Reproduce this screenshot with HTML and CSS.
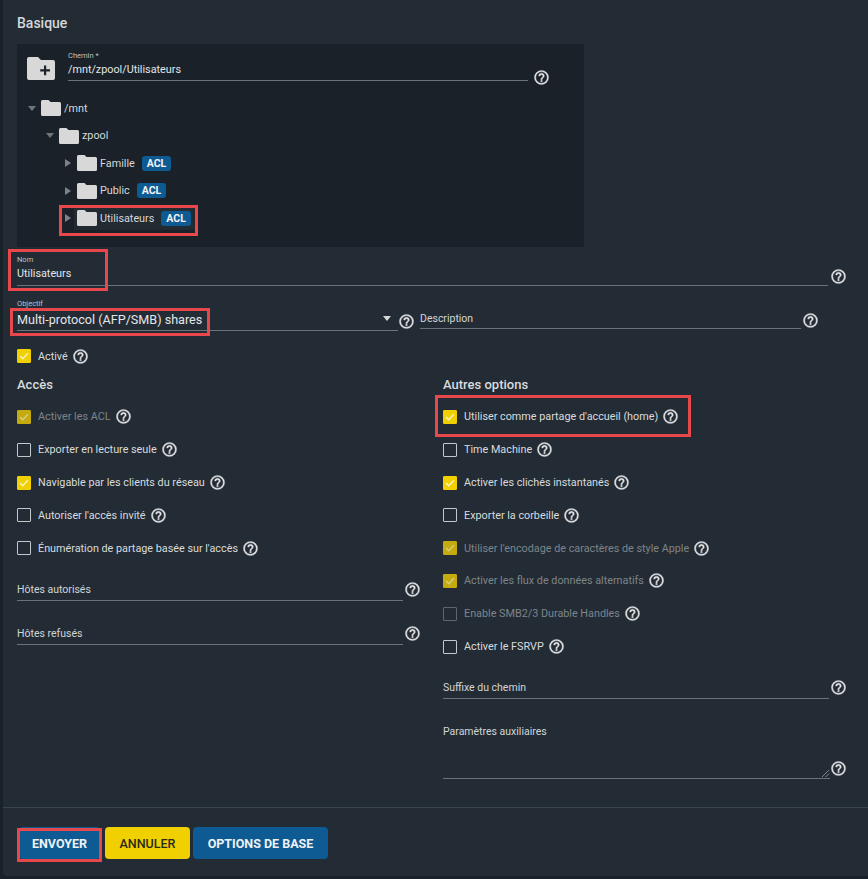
FILE: index.html
```html
<!DOCTYPE html>
<html lang="fr">
<head>
<meta charset="utf-8">
<title>Basique</title>
<link rel="stylesheet" href="styles.css">
</head>
<body>
<svg class="defs" aria-hidden="true">
  <symbol id="help" viewBox="0 0 24 24"><path d="M11,18H13V16H11V18M12,2A10,10 0 0,0 2,12A10,10 0 0,0 12,22A10,10 0 0,0 22,12A10,10 0 0,0 12,2M12,20C7.59,20 4,16.41 4,12C4,7.59 7.59,4 12,4C16.41,4 20,7.59 20,12C20,16.41 16.41,20 12,20M12,6A4,4 0 0,0 8,10H10A2,2 0 0,1 12,8A2,2 0 0,1 14,10C14,12 11,11.75 11,15H13C13,12.75 16,12.5 16,10A4,4 0 0,0 12,6Z"/></symbol>
  <symbol id="folder" viewBox="0 0 20 16"><path d="M1.5 0H7.5L9.5 2H18.5A1.5 1.5 0 0 1 20 3.5V14.5A1.5 1.5 0 0 1 18.5 16H1.5A1.5 1.5 0 0 1 0 14.5V1.5A1.5 1.5 0 0 1 1.5 0Z"/></symbol>
  <symbol id="check" viewBox="0 0 14 14"><path d="M2.5 7.2L5.6 10.2L11.5 3.8" fill="none" stroke="currentColor" stroke-width="1.8"/></symbol>
</svg>
<main class="card">
  <h2 class="section-title">Basique</h2>
  <section class="tree-box">
    <div class="path-row">
      <svg class="folder-add" viewBox="0 0 28 23"><path class="folder-add-shape" d="M2 0H11L14 3H26A2 2 0 0 1 28 5V21A2 2 0 0 1 26 23H2A2 2 0 0 1 0 21V2A2 2 0 0 1 2 0Z"/><path class="folder-add-plus" d="M17 8.5H19.2V12.3H23V14.5H19.2V18.300H17V14.500H13.200V12.300H17Z"/></svg>
      <div class="field path-field">
        <span class="mini-label">Chemin *</span>
        <span class="value">/mnt/zpool/Utilisateurs</span>
      </div>
      <svg class="help path-help"><use href="#help"/></svg>
    </div>
    <ul class="tree">
      <li class="node lvl-0"><span class="arrow down"></span><svg class="folder"><use href="#folder"/></svg><span>/mnt</span></li>
      <li class="node lvl-1"><span class="arrow down"></span><svg class="folder"><use href="#folder"/></svg><span>zpool</span></li>
      <li class="node lvl-2"><span class="arrow right"></span><svg class="folder"><use href="#folder"/></svg><span>Famille</span><span class="acl">ACL</span></li>
      <li class="node lvl-2"><span class="arrow right"></span><svg class="folder"><use href="#folder"/></svg><span>Public</span><span class="acl">ACL</span></li>
      <li class="node lvl-2"><span class="arrow right"></span><span class="node-active"><svg class="folder"><use href="#folder"/></svg><span>Utilisateurs</span><span class="acl">ACL</span></span></li>
    </ul>
  </section>

  <div class="name-row">
    <div class="field grow">
      <span class="mini-label">Nom</span>
      <span class="value">Utilisateurs</span>
    </div>
    <svg class="help"><use href="#help"/></svg>
  </div>

  <div class="purpose-row">
    <div class="field purpose">
      <span class="mini-label">Objectif</span>
      <span class="value large">Multi-protocol (AFP/SMB) shares</span>
      <span class="caret"></span>
    </div>
    <svg class="help"><use href="#help"/></svg>
    <div class="field description"><span class="plain-label">Description</span></div>
    <svg class="help"><use href="#help"/></svg>
  </div>

  <label class="check-row active-row"><span class="box on"><svg><use href="#check"/></svg></span><span>Activé</span><svg class="help"><use href="#help"/></svg></label>

  <div class="columns">
    <div class="col">
      <h3 class="col-title">Accès</h3>
      <div class="check-row dim"><span class="box on"><svg><use href="#check"/></svg></span><span>Activer les ACL</span><svg class="help"><use href="#help"/></svg></div>
      <div class="check-row"><span class="box"></span><span>Exporter en lecture seule</span><svg class="help"><use href="#help"/></svg></div>
      <div class="check-row"><span class="box on"><svg><use href="#check"/></svg></span><span>Navigable par les clients du réseau</span><svg class="help"><use href="#help"/></svg></div>
      <div class="check-row"><span class="box"></span><span>Autoriser l'accès invité</span><svg class="help"><use href="#help"/></svg></div>
      <div class="check-row"><span class="box"></span><span>Énumération de partage basée sur l'accès</span><svg class="help"><use href="#help"/></svg></div>
      <div class="line-row first-line"><div class="field grow"><span class="plain-label">Hôtes autorisés</span></div><svg class="help"><use href="#help"/></svg></div>
      <div class="line-row"><div class="field grow"><span class="plain-label">Hôtes refusés</span></div><svg class="help"><use href="#help"/></svg></div>
    </div>
    <div class="col right">
      <h3 class="col-title">Autres options</h3>
      <div class="check-row"><span class="box on"><svg><use href="#check"/></svg></span><span>Utiliser comme partage d'accueil (home)</span><svg class="help"><use href="#help"/></svg></div>
      <div class="check-row"><span class="box"></span><span>Time Machine</span><svg class="help"><use href="#help"/></svg></div>
      <div class="check-row"><span class="box on"><svg><use href="#check"/></svg></span><span>Activer les clichés instantanés</span><svg class="help"><use href="#help"/></svg></div>
      <div class="check-row"><span class="box"></span><span>Exporter la corbeille</span><svg class="help"><use href="#help"/></svg></div>
      <div class="check-row dim"><span class="box on"><svg><use href="#check"/></svg></span><span>Utiliser l'encodage de caractères de style Apple</span><svg class="help"><use href="#help"/></svg></div>
      <div class="check-row dim"><span class="box on"><svg><use href="#check"/></svg></span><span>Activer les flux de données alternatifs</span><svg class="help"><use href="#help"/></svg></div>
      <div class="check-row dim"><span class="box"></span><span>Enable SMB2/3 Durable Handles</span><svg class="help"><use href="#help"/></svg></div>
      <div class="check-row"><span class="box"></span><span>Activer le FSRVP</span><svg class="help"><use href="#help"/></svg></div>
      <div class="line-row suffix"><div class="field grow"><span class="plain-label">Suffixe du chemin</span></div><svg class="help"><use href="#help"/></svg></div>
      <div class="aux-row">
        <div class="field grow aux"><span class="plain-label">Paramètres auxiliaires</span><svg class="grip" viewBox="0 0 10 10"><path d="M1 9L9 1M5 9L9 5" fill="none" stroke="#8b9196" stroke-width="1"/></svg></div>
        <svg class="help"><use href="#help"/></svg>
      </div>
    </div>
  </div>

  <footer class="actions">
    <button class="btn blue envoyer">ENVOYER</button>
    <button class="btn yellow">ANNULER</button>
    <button class="btn blue options">OPTIONS DE BASE</button>
  </footer>
</main>
<span class="mark mark-tree"></span>
<span class="mark mark-name"></span>
<span class="mark mark-purpose"></span>
<span class="mark mark-home"></span>
<span class="mark mark-send"></span>
</body>
</html>
```
FILE: styles.css
```css
* { box-sizing: border-box; }
html, body { height: 100%; }
body {
  margin: 0;
  position: relative;
  width: 868px;
  height: 879px;
  overflow: hidden;
  background: #1a2229;
  color: #e4e6e8;
  font-family: Roboto, "Liberation Sans", sans-serif;
  font-size: 10.8px;
}
.defs { position: absolute; width: 0; height: 0; }
.card {
  margin-left: 3px;
  height: 876px;
  border-radius: 0 0 0 4px;
  background: #232c35;
  padding: 0 0 0 14px;
  display: flex;
  flex-direction: column;
}
.section-title {
  margin: 0;
  height: 44px;
  line-height: 46px;
  font-size: 14px;
  font-weight: 500;
  color: #d5d8da;
}
.tree-box {
  width: 567px;
  height: 203px;
  background: #1a2129;
}
.path-row {
  display: flex;
  height: 38px;
  padding: 13px 0 0 10px;
  align-items: flex-start;
}
.folder-add { width: 28px; height: 23px; margin-right: 13px; flex: none; }
.folder-add-shape { fill: #d8d8d8; }
.folder-add-plus { fill: #1d232a; }
.field {
  position: relative;
  display: flex;
  flex-direction: column;
  border-bottom: 1px solid #6b7278;
}
.grow { flex: 1; }
.path-field { width: 460px; height: 30px; margin-top: -6px; }
.path-help { margin: 12px 0 0 5px; }
.mini-label { font-size: 7.5px; line-height: 9px; color: #bcc0c3; }
.value { font-size: 10.8px; line-height: 14px; color: #e4e6e8; margin-top: 3px; }
.value.large { font-size: 12.6px; line-height: 16px; margin-top: 4px; }
.plain-label { font-size: 10.5px; line-height: 14px; color: #d2d5d7; }
.help { width: 17px; height: 17px; flex: none; fill: #e2e3e4; stroke: #e2e3e4; stroke-width: 0.5; }
.tree { list-style: none; margin: 0; padding: 12.7px 0 0; }
.node {
  display: flex;
  align-items: center;
  height: 27.5px;
  color: #d6d8da;
  font-size: 10.8px;
}
.lvl-0 { padding-left: 11px; }
.lvl-1 { padding-left: 29px; }
.lvl-2 { padding-left: 47px; }
.arrow { width: 0; height: 0; margin-right: 6px; flex: none; }
.arrow.down { border: 4px solid transparent; border-top: 5px solid #6f767b; border-bottom: 0; margin-right: 5px; margin-left: 0; }
.arrow.right { border: 4px solid transparent; border-left: 6px solid #7c8287; border-right: 0; margin-left: 1px; margin-right: 6px; }
.folder { width: 20px; height: 16px; fill: #d8d8d8; margin-right: 3px; flex: none; }
.node-active { display: flex; align-items: center; height: 24px; padding-right: 5px; background: #222a32; margin-left: -3px; padding-left: 3px; }
.acl {
  margin-left: 7px;
  height: 15px;
  padding: 0 5px;
  border-radius: 3px;
  background: #0e5a92;
  color: #f1f4f6;
  font-size: 10.5px;
  font-weight: 700;
  line-height: 15px;
}
.name-row { display: flex; align-items: flex-end; height: 39px; width: 830px; }
.name-row .field { height: 31px; }
.name-row .help { margin: 0 0 1px 2px; }
.purpose-row { display: flex; height: 45px; align-items: flex-end; width: 830px; }
.purpose { width: 381px; height: 32px; }
.purpose-row .help { margin: 0 0 1px 0; }
.caret { position: absolute; right: 7px; top: 17px; width: 0; height: 0; border: 4px solid transparent; border-top: 5px solid #d8d8d8; border-bottom: 0; }
.description { width: 381px; height: 17px; margin: 0 0 2px 5px; }
.purpose-row .help:last-child { margin: 0 0 2px 1px; }
.check-row {
  display: flex;
  align-items: center;
  height: 32.8px;
  font-size: 10.8px;
  color: #d9dbdd;
}
.check-row .help { margin-left: 4px; }
.active-row { height: 33px; margin-top: 9px; }
.box {
  width: 14px;
  height: 14px;
  margin: 0 7px 0 0;
  border: 1px solid #c5c8ca;
  border-radius: 1px;
  flex: none;
}
.box.on { background: #f0d000; border-color: #f0d000; color: #f7f1c0; }
.box svg { display: block; width: 12px; height: 12px; }
.dim { color: #7e8489; }
.dim .box { border-color: #5f666b; }
.dim .box.on { background: #c4ab10; border-color: #c4ab10; color: #d8cd7d; }
.columns { display: flex; width: 830px; height: 438px; margin-top: -3px; }
.col { width: 404px; }
.col.right { width: 404px; margin-left: 22px; }
.col-title {
  margin: 0;
  height: 31px;
  line-height: 30px;
  font-size: 13px;
  font-weight: 500;
  color: #d9dbdd;
}
.line-row { display: flex; align-items: flex-end; height: 44px; }
.line-row .field { height: 18px; }
.line-row .help { margin: 0 0 3px 1px; }
.line-row.first-line { height: 36px; }
.line-row.suffix { height: 36px; }
.aux-row { display: flex; align-items: flex-end; height: 80px; }
.aux { height: 54px; }
.aux-row .help { margin: 0 0 2px 0; }
.grip { position: absolute; right: 0; bottom: 0; width: 9px; height: 9px; }
.actions {
  margin: 0 0 0 -14px;
  height: 69px;
  border-top: 1px solid #3a444c;
  padding: 19px 0 0 16px;
  display: flex;
  gap: 4px;
}
.btn {
  height: 32px;
  border: 0;
  border-radius: 4px;
  font-family: inherit;
  font-size: 12.5px;
  font-weight: 700;
  padding: 0;
}
.blue { background: #0e5a92; color: #eef2f5; }
.yellow { background: #f0d000; color: #2a2a1a; width: 85px; font-weight: 500; margin-left: 1px; }
.envoyer { width: 81px; }
.options { width: 135px; margin-left: -1px; }
.mark { position: absolute; border: 3px solid #e8474c; pointer-events: none; }
.mark-tree { left: 59px; top: 205px; width: 139px; height: 31px; }
.mark-name { left: 8px; top: 249px; width: 100px; height: 42px; }
.mark-purpose { left: 10px; top: 308px; width: 200px; height: 28px; }
.mark-home { left: 435px; top: 395px; width: 256px; height: 42px; }
.mark-send { left: 17px; top: 828px; width: 85px; height: 34px; }
```
